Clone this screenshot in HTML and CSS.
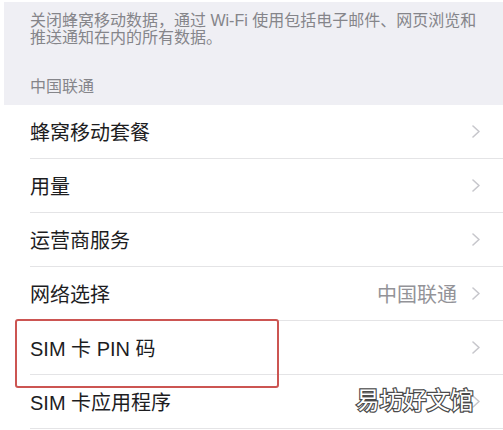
FILE: index.html
```html
<!DOCTYPE html>
<html lang="zh-CN">
<head>
<meta charset="utf-8">
<title>蜂窝移动网络</title>
<link rel="stylesheet" href="styles.css">
</head>
<body>
<div class="page">
  <div class="group-head">
    <p class="note">关闭蜂窝移动数据，通过 Wi-Fi 使用包括电子邮件、网页浏览和<br>推送通知在内的所有数据。</p>
    <p class="caption">中国联通</p>
  </div>
  <ul class="list">
    <li class="row"><div class="row-inner"><span class="label">蜂窝移动套餐</span><svg class="chev" viewBox="0 0 8 13" width="8" height="13"><polyline points="1,1 7,6.5 1,12"/></svg></div></li>
    <li class="row"><div class="row-inner"><span class="label">用量</span><svg class="chev" viewBox="0 0 8 13" width="8" height="13"><polyline points="1,1 7,6.5 1,12"/></svg></div></li>
    <li class="row"><div class="row-inner"><span class="label">运营商服务</span><svg class="chev" viewBox="0 0 8 13" width="8" height="13"><polyline points="1,1 7,6.5 1,12"/></svg></div></li>
    <li class="row"><div class="row-inner"><span class="label">网络选择</span><span class="detail">中国联通</span><svg class="chev" viewBox="0 0 8 13" width="8" height="13"><polyline points="1,1 7,6.5 1,12"/></svg></div></li>
    <li class="row"><div class="row-inner"><span class="label">SIM 卡 PIN 码</span><svg class="chev" viewBox="0 0 8 13" width="8" height="13"><polyline points="1,1 7,6.5 1,12"/></svg></div></li>
    <li class="row"><div class="row-inner"><span class="label">SIM 卡应用程序</span><svg class="chev" viewBox="0 0 8 13" width="8" height="13"><polyline points="1,1 7,6.5 1,12"/></svg></div></li>
  </ul>
  <div class="highlight"></div>
  <div class="watermark">易坊好文馆</div>
</div>
</body>
</html>
```
FILE: styles.css
```css
* { box-sizing: border-box; }
html, body { margin: 0; padding: 0; background: #fff; }
body {
  font-family: "Liberation Sans", "Noto Sans CJK SC", sans-serif;
  width: 503px;
  height: 430px;
  overflow: hidden;
}
.page { position: relative; width: 503px; height: 430px; }
.group-head {
  margin: 2px 0 0 4px;
  background: #efeff4;
  padding: 10px 10px 10px 26px;
  height: 103px;
}
.note {
  margin: 0;
  font-size: 16px;
  line-height: 17px;
  color: #85858a;
  white-space: nowrap;
}
.caption {
  margin: 32px 0 0;
  font-size: 16px;
  line-height: 17px;
  color: #85858a;
}
.list { list-style: none; margin: 0; padding: 0; }
.row { padding-left: 30px; }
.row-inner {
  height: 54px;
  border-bottom: 1px solid #e4e4e6;
  display: flex;
  align-items: center;
  padding-right: 23px;
}
.label {
  flex: 1;
  font-size: 20px;
  color: #1d1d1f;
}
.detail {
  font-size: 20px;
  color: #939398;
  margin-right: 15px;
}
.chev { fill: none; stroke: #c7c7cc; stroke-width: 1.6; stroke-linecap: round; stroke-linejoin: round; }
.highlight {
  position: absolute;
  left: 15px;
  top: 317px;
  width: 264px;
  height: 69px;
  border: 2px solid #cc5552;
  border-radius: 3px;
}
.watermark {
  position: absolute;
  left: 356px;
  top: 382px;
  font-family: "Noto Sans CJK SC", sans-serif;
  font-size: 23.5px;
  line-height: 30px;
  color: #fff;
  -webkit-text-stroke: 2.4px #4a4a4a;
  paint-order: stroke fill;
}
```
